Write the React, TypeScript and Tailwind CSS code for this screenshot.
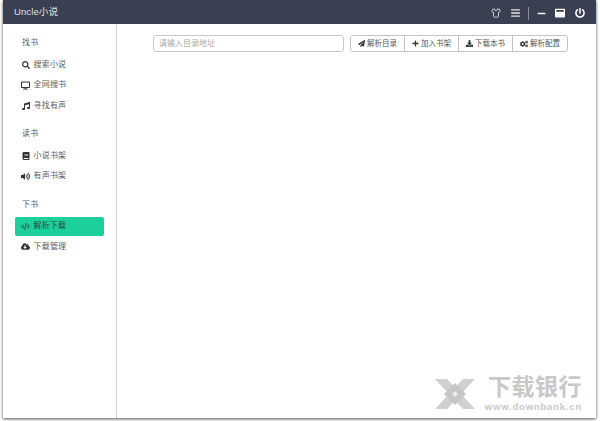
import { FaSearch, FaDesktop, FaMusic, FaBook, FaVolumeUp, FaCode, FaCloudDownloadAlt, FaPaperPlane, FaPlus, FaDownload, FaCogs, FaBars, FaMinus, FaWindowMaximize, FaPowerOff } from "react-icons/fa";
import { Shirt } from "lucide-react";
import { ReactNode } from "react";

const font = { fontFamily: '"Liberation Sans", "Noto Sans CJK SC", sans-serif' };

function NavItem({ icon, label, active }: { icon: ReactNode; label: string; active?: boolean }) {
  return (
    <div
      className={`mx-3 flex h-[19px] w-[89px] items-center gap-[3px] rounded-[2px] pl-[6px] text-[8px] ${
        active ? "bg-[#1ccf9b] text-[#2c4a40]" : "text-[#5c5c5c]"
      }`}
    >
      <span className={`flex w-[9.5px] items-center justify-center ${active ? "text-[#2c6a58]" : "text-[#333]"}`}>{icon}</span>
      <span className="tracking-[0.2px]">{label}</span>
    </div>
  );
}

function ToolButton({ icon, label, last }: { icon: ReactNode; label: string; last?: boolean }) {
  return (
    <div
      className={`flex h-full w-[54px] items-center justify-center gap-[2px] text-[7.5px] text-[#555] ${
        last ? "" : "border-r border-[#c4c4c4]"
      }`}
    >
      <span className="text-[#333]">{icon}</span>
      <span>{label}</span>
    </div>
  );
}

export default function App() {
  return (
    <div className="h-[421px] w-[600px] overflow-hidden bg-white pl-[3px]" style={font}>
      <div className="flex h-[418px] w-[593px] flex-col bg-white shadow-[0_1px_3px_rgba(0,0,0,0.7)]">
        <header className="flex h-[24px] shrink-0 items-center bg-[#3a3f51] pl-[11px] pr-[11px] text-white">
          <span className="text-[9.5px] tracking-[0.1px] text-[#dfe1e6]">Uncle小说</span>
          <div className="ml-auto flex items-center pt-[2px]">
            <Shirt className="h-[10px] w-[10px] text-[#e6e6e6]" strokeWidth={2} />
            <FaBars className="ml-[10px] h-[10px] w-[9px] text-[#e6e6e6]" />
            <div className="ml-[8px] h-[13px] w-px bg-[#8b8f9c]" />
            <FaMinus className="ml-[8px] h-[9px] w-[9px]" />
            <FaWindowMaximize className="ml-[9px] h-[10px] w-[10px]" />
            <FaPowerOff className="ml-[10px] h-[10px] w-[10px]" />
          </div>
        </header>
        <div className="flex min-h-0 flex-1">
          <aside className="w-[114px] shrink-0 border-r border-[#d0d0d0] pt-[11px]">
            <div className="flex h-[16px] items-center pl-[19px] text-[8px] tracking-[0.2px] text-[#5c5c5c]">找书</div>
            <div className="mt-[4px] flex flex-col gap-[1.5px]">
              <NavItem icon={<FaSearch size={8} />} label="搜索小说" />
              <NavItem icon={<FaDesktop size={9} />} label="全网搜书" />
              <NavItem icon={<FaMusic size={8} />} label="寻找有声" />
            </div>
            <div className="mt-[11px] flex h-[16px] items-center pl-[19px] text-[8px] tracking-[0.2px] text-[#5c5c5c]">读书</div>
            <div className="mt-[4px] flex flex-col gap-[1.5px]">
              <NavItem icon={<FaBook size={8} />} label="小说书架" />
              <NavItem icon={<FaVolumeUp size={9} />} label="有声书架" />
            </div>
            <div className="mt-[11px] flex h-[16px] items-center pl-[19px] text-[8px] tracking-[0.2px] text-[#5c5c5c]">下书</div>
            <div className="mt-[4px] flex flex-col gap-[1.5px]">
              <NavItem active icon={<FaCode size={9} />} label="解析下载" />
              <NavItem icon={<FaCloudDownloadAlt size={9} />} label="下载管理" />
            </div>
          </aside>
          <main className="relative min-w-0 flex-1">
            <div className="flex items-center pl-[36px] pt-[11px]">
              <div className="flex h-[17px] w-[191px] items-center rounded-[3px] border border-[#c8c8c8] pl-[5px] text-[8px] text-[#aaa]">
                请输入目录地址
              </div>
              <div className="ml-[6px] flex h-[17px] items-center rounded-[3px] border border-[#c4c4c4]">
                <ToolButton icon={<FaPaperPlane size={7} />} label="解析目录" />
                <ToolButton icon={<FaPlus size={7} />} label="加入书架" />
                <ToolButton icon={<FaDownload size={7} />} label="下载本书" />
                <ToolButton last icon={<FaCogs size={8} />} label="解析配置" />
              </div>
            </div>
            {/* watermark */}
            <div className="absolute bottom-[6px] right-[14px] flex items-center gap-[11px]">
              <svg width="40" height="30" viewBox="0 0 40 30">
                <path d="M0 0h12l28 30H28zM40 0H28L0 30h12z" fill="#d0d0d0" />
                <path d="M20 4l11 11-11 11-11-11z" fill="#c6c6c6" />
                <path d="M20 12l3 3-3 3-3-3z" fill="#ececec" />
              </svg>
              <div className="flex w-[96px] flex-col items-end">
                <span className="text-[23px] font-bold leading-[24px] tracking-[0.5px] text-[#c8c8c8]">下载银行</span>
                <span className="mt-[2px] text-[9.5px] font-bold leading-[11px] tracking-[0.8px] text-[#c8c8c8]">www.downbank.cn</span>
              </div>
            </div>
          </main>
        </div>
      </div>
    </div>
  );
}
